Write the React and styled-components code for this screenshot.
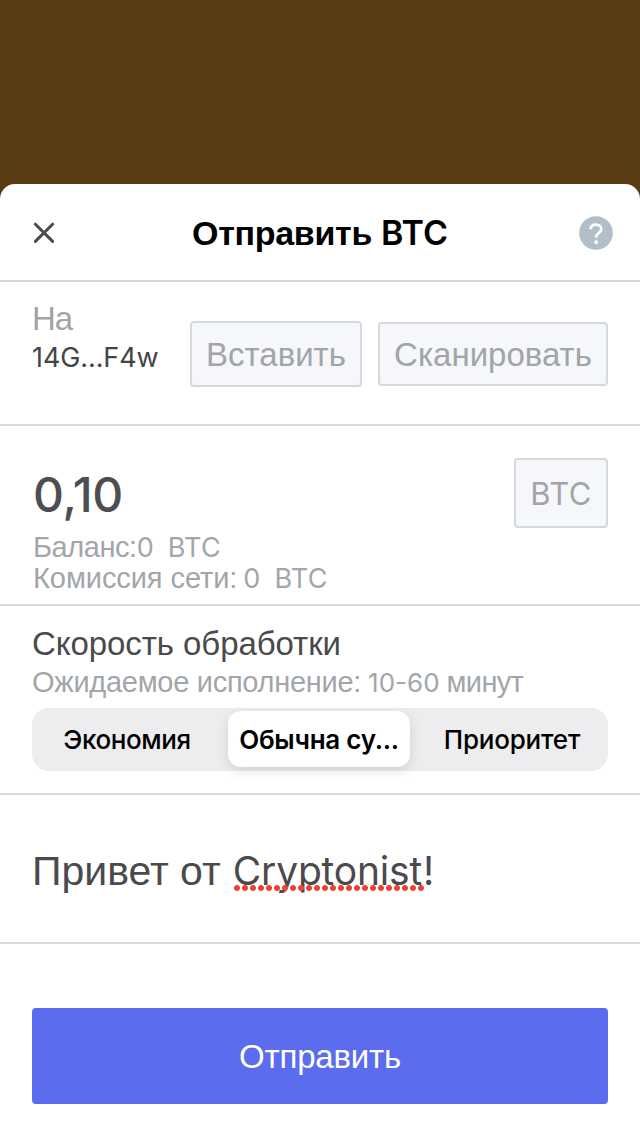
import React, { useState } from 'react';
import { styled, createGlobalStyle } from 'styled-components';

const speeds = [
  { id: 'economy', label: 'Экономия', width: 190, spacing: -0.4 },
  { id: 'regular', label: 'Обычна су...', width: 182, spacing: -0.25 },
  { id: 'priority', label: 'Приоритет', width: 194, spacing: -0.2 },
];

function App() {
  const [speed, setSpeed] = useState('regular');

  return (
    <StPage>
      <GlobalStyle />
      <StSheet>
        <StHeader>
          <StIconButton aria-label="Закрыть">
            <svg width="34" height="34" viewBox="0 0 34 34" fill="none">
              <path d="M8.4 8.2L25.6 25.4M25.6 8.2L8.4 25.4" stroke="#4b4b4d" strokeWidth="3" strokeLinecap="round" />
            </svg>
          </StIconButton>
          <StTitle>
            <StTitleWord>Отправить</StTitleWord>
            <StTitleCoin>BTC</StTitleCoin>
          </StTitle>
          <StIconButton aria-label="Помощь">
            <svg width="34" height="34" viewBox="0 0 34 34" fill="none">
              <circle cx="17" cy="17" r="16.8" fill="#b3bfc8" />
              <path
                d="M11.6 13.2C11.7 10.3 13.9 8.6 17 8.6C20.1 8.6 22.3 10.4 22.3 13C22.3 15.1 21.2 16.1 19.6 17.2C17.8 18.4 17.1 19.3 17.1 21.6"
                stroke="#fff"
                strokeWidth="2.6"
              />
              <circle cx="17.1" cy="26.2" r="2" fill="#fff" />
            </svg>
          </StIconButton>
        </StHeader>

        <StRecipient>
          <StRecipientInfo>
            <StRecipientLabel>На</StRecipientLabel>
            <StAddress>14G...F4w</StAddress>
          </StRecipientInfo>
          <StButtonGroup>
            <StGhostButton $width={172} $height={66}>Вставить</StGhostButton>
            <StGhostButton $width={230} $height={64}>Сканировать</StGhostButton>
          </StButtonGroup>
        </StRecipient>

        <StAmount>
          <div>
            <StValue>0,10</StValue>
            <StNoteLine>
              <StNote $spacing={-0.45}>Баланс:</StNote>
              <StNoteNumber>0</StNoteNumber>
              <StNoteNumber $gap={14} $spacing={0.3}>BTC</StNoteNumber>
            </StNoteLine>
            <StNoteLine>
              <StNote $spacing={-0.07}>Комиссия сети:</StNote>
              <StNoteNumber $gap={6}>0</StNoteNumber>
              <StNoteNumber $gap={14} $spacing={0.3}>BTC</StNoteNumber>
            </StNoteLine>
          </div>
          <StCurrency $width={94} $height={70}>BTC</StCurrency>
        </StAmount>

        <StSpeed>
          <StSpeedTitle>Скорость обработки</StSpeedTitle>
          <StNoteLine $height={32}>
            <StNote $spacing={-0.28}>Ожидаемое исполнение:</StNote>
            <StNoteNumber $gap={7} $size={26}>10-60</StNoteNumber>
            <StNoteTail>минут</StNoteTail>
          </StNoteLine>
          <StSegments>
            {speeds.map((item) => (
              <StSegment
                key={item.id}
                $width={item.width}
                $spacing={item.spacing}
                $active={item.id === speed}
                onClick={() => setSpeed(item.id)}
              >
                {item.label}
              </StSegment>
            ))}
          </StSegments>
        </StSpeed>

        <StMessage>
          <StMessageText>Привет от</StMessageText>
          <StMisspelled>Cryptonist</StMisspelled>
          <StMessageEnd>!</StMessageEnd>
        </StMessage>

        <StFooter>
          <StSubmit>Отправить</StSubmit>
        </StFooter>
      </StSheet>
    </StPage>
  );
}

export default App;

const GlobalStyle = createGlobalStyle`
  body {
    margin: 0;
    font-family: 'Liberation Sans', Arial, sans-serif;
  }

  button {
    margin: 0;
    padding: 0;
    border: none;
    background: none;
    font-family: inherit;
    white-space: nowrap;
  }
`;

const StPage = styled.div`
  height: 1136px;
  padding-top: 184px;
  box-sizing: border-box;
  background: #593b14;
`;

const StSheet = styled.div`
  height: 952px;
  background: #fff;
  border-radius: 15px 15px 0 0;
`;

const StHeader = styled.div`
  display: flex;
  align-items: center;
  justify-content: space-between;
  height: 98px;
  padding: 1px 27px 0;
  box-sizing: border-box;
  border-bottom: 2px solid #d5d6de;
`;

const StIconButton = styled.button`
  display: flex;
`;

const StTitle = styled.div`
  display: flex;
  align-items: baseline;
  font-size: 34px;
  line-height: 48px;
  color: #000;
`;

const StTitleWord = styled.span`
  font-weight: 700;
  letter-spacing: -0.3px;
`;

const StTitleCoin = styled.span`
  margin-left: 9px;
  font-family: Inter, sans-serif;
  font-weight: 600;
`;

const StSection = styled.div`
  display: flex;
  justify-content: space-between;
  box-sizing: border-box;
  border-bottom: 2px solid #d7d9df;
`;

const StRecipient = styled(StSection)`
  height: 144px;
  padding: 18px 32px 0;
`;

const StRecipientInfo = styled.div`
  display: flex;
  flex-direction: column;
`;

const StRecipientLabel = styled.span`
  font-size: 33px;
  line-height: 38px;
  letter-spacing: -1px;
  color: #a1a5a9;
`;

const StAddress = styled.span`
  font-family: Inter, sans-serif;
  font-size: 27px;
  line-height: 40px;
  letter-spacing: -0.1px;
  color: #444446;
`;

const StButtonGroup = styled.div`
  display: flex;
  align-items: center;
  gap: 16px;
  height: 66px;
  margin-top: 21px;
`;

const StGhostButton = styled.button`
  width: ${({ $width }) => $width}px;
  height: ${({ $height }) => $height}px;
  padding-top: 2px;
  border: 2px solid #d5d9df;
  border-radius: 4px;
  background: #f5f7fb;
  color: #a2a5a8;
  font-size: 33px;
`;

const StCurrency = styled(StGhostButton)`
  margin-top: 32px;
  padding-top: 0;
  font-family: Inter, sans-serif;
  font-size: 31px;
  letter-spacing: 0.4px;
`;

const StAmount = styled(StSection)`
  height: 180px;
  padding: 0 32px 0 33px;
`;

const StValue = styled.div`
  margin: 38px 0 7px;
  font-family: Inter, sans-serif;
  font-size: 48px;
  font-weight: 500;
  line-height: 61px;
  letter-spacing: -0.2px;
  color: #4e4e50;
`;

const StNoteLine = styled.div`
  display: flex;
  align-items: baseline;
  height: ${({ $height = 31 }) => $height}px;
  line-height: ${({ $height = 31 }) => $height}px;
  color: #a1a6ab;
`;

const StNote = styled.span`
  font-size: 29px;
  letter-spacing: ${({ $spacing = 0 }) => $spacing}px;
`;

const StNoteNumber = styled.span`
  margin-left: ${({ $gap = 0 }) => $gap}px;
  font-family: Inter, sans-serif;
  font-size: ${({ $size = 27 }) => $size}px;
  letter-spacing: ${({ $spacing = 0 }) => $spacing}px;
`;

const StNoteTail = styled.span`
  margin-left: 7px;
  font-size: 29px;
  letter-spacing: -0.65px;
`;

const StSpeed = styled(StSection)`
  flex-direction: column;
  justify-content: flex-start;
  height: 189px;
  padding: 19px 32px 0;
`;

const StSpeedTitle = styled.div`
  margin-bottom: 3px;
  font-size: 33px;
  line-height: 38px;
  letter-spacing: -0.07px;
  color: #4a4a4c;
`;

const StSegments = styled.div`
  display: flex;
  height: 63px;
  margin-top: 10px;
  padding: 3px 4px;
  box-sizing: border-box;
  border-radius: 17px;
  background: #ededef;
`;

const StSegment = styled.button`
  flex: none;
  width: ${({ $width }) => $width}px;
  height: 56px;
  border-radius: 13px;
  background: ${({ $active }) => ($active ? '#fff' : 'transparent')};
  box-shadow: ${({ $active }) => ($active ? '0 4px 12px rgba(0, 0, 0, 0.12)' : 'none')};
  color: #000;
  font-family: Inter, sans-serif;
  font-size: 26px;
  font-weight: ${({ $active }) => ($active ? 600 : 500)};
  letter-spacing: ${({ $spacing }) => $spacing}px;

  &:first-child {
    margin-right: 2px;
    padding-right: 8px;
  }

  &:last-child {
    padding-left: 10px;
  }
`;

const StMessage = styled(StSection)`
  justify-content: flex-start;
  align-items: baseline;
  height: 149px;
  padding: 46px 32px 0;
  line-height: 60px;
  color: #4a4a4c;
`;

const StMessageText = styled.span`
  font-size: 41px;
`;

const StMisspelled = styled.span`
  position: relative;
  margin-left: 12px;
  font-family: Inter, sans-serif;
  font-size: 39px;
  letter-spacing: -0.2px;

  &::after {
    content: '';
    position: absolute;
    left: 0;
    top: 43px;
    width: 192px;
    height: 8px;
    background: radial-gradient(circle, #ef4136 2.6px, transparent 3.3px) 0 0 / 8px 8px;
  }
`;

const StMessageEnd = styled.span`
  margin-left: 1px;
  font-family: Inter, sans-serif;
  font-size: 39px;
`;

const StFooter = styled.div`
  padding: 64px 32px 32px;
`;

const StSubmit = styled.button`
  width: 100%;
  height: 96px;
  padding-top: 2px;
  border-radius: 4px;
  background: #5b6cee;
  color: #fff;
  font-size: 33px;
  letter-spacing: -0.2px;
`;
